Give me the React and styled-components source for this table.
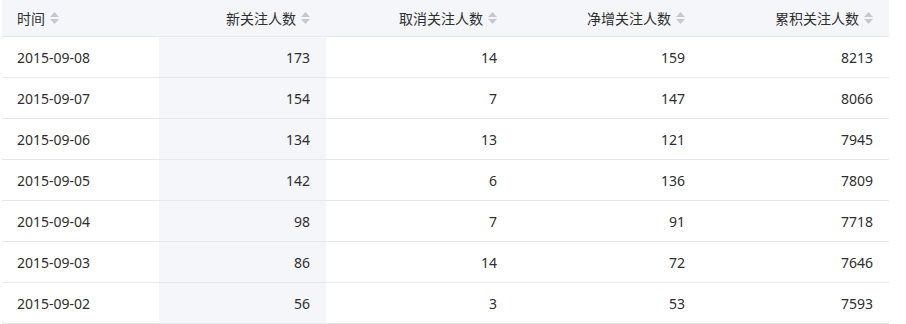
import styled, { createGlobalStyle } from "styled-components";

const rows = [
  ["2015-09-08", 173, 14, 159, 8213],
  ["2015-09-07", 154, 7, 147, 8066],
  ["2015-09-06", 134, 13, 121, 7945],
  ["2015-09-05", 142, 6, 136, 7809],
  ["2015-09-04", 98, 7, 91, 7718],
  ["2015-09-03", 86, 14, 72, 7646],
  ["2015-09-02", 56, 3, 53, 7593],
];

const columns = [
  { title: "时间", width: 157, align: "left" },
  { title: "新关注人数", width: 167, align: "right", sorted: true },
  { title: "取消关注人数", width: 187, align: "right" },
  { title: "净增关注人数", width: 188, align: "right" },
  { title: "累积关注人数", width: 188, align: "right" },
];

const GlobalStyle = createGlobalStyle`
  body {
    margin: 0;
    background: #fff;
    font-family: "Noto Sans", "Noto Sans CJK SC", sans-serif;
  }
`;

const Wrapper = styled.div`
  padding-left: 2px;
`;

const Table = styled.table`
  width: 887px;
  border-collapse: collapse;
  table-layout: fixed;
  font-size: 14px;
  color: #2e2e2e;
`;

const HeadCell = styled.th`
  height: 36px;
  padding: ${(p) => (p.$align === "left" ? "0 16px 0 15px" : "0 16px")};
  background: #f5f6fa;
  border-bottom: 1px solid #e6e8ee;
  font-weight: normal;
  text-align: ${(p) => p.$align};
  white-space: nowrap;
`;

const HeadInner = styled.span`
  display: inline-flex;
  align-items: center;
  gap: 5px;
`;

const Cell = styled.td`
  height: 40px;
  padding: ${(p) => (p.$align === "left" ? "0 16px 0 15px" : "0 16px")};
  border-bottom: 1px solid #e6e8ee;
  background: ${(p) => (p.$sorted ? "#f5f6fa" : "#fff")};
  text-align: ${(p) => p.$align};
`;

const SortIcon = () => (
  <svg width="9" height="12" viewBox="0 0 9 12">
    <path d="M4.5 0 L9 5 L0 5 Z" fill="#c5c8ce" />
    <path d="M0 7 L9 7 L4.5 12 Z" fill="#c5c8ce" />
  </svg>
);

export default function App() {
  return (
    <Wrapper>
      <GlobalStyle />
      <Table>
        <colgroup>
          {columns.map((c) => (
            <col key={c.title} style={{ width: c.width }} />
          ))}
        </colgroup>
        <thead>
          <tr>
            {columns.map((c) => (
              <HeadCell key={c.title} $align={c.align}>
                <HeadInner>
                  {c.title}
                  <SortIcon />
                </HeadInner>
              </HeadCell>
            ))}
          </tr>
        </thead>
        <tbody>
          {rows.map((r) => (
            <tr key={r[0]}>
              {r.map((v, i) => (
                <Cell key={i} $align={columns[i].align} $sorted={columns[i].sorted}>
                  {v}
                </Cell>
              ))}
            </tr>
          ))}
        </tbody>
      </Table>
    </Wrapper>
  );
}
